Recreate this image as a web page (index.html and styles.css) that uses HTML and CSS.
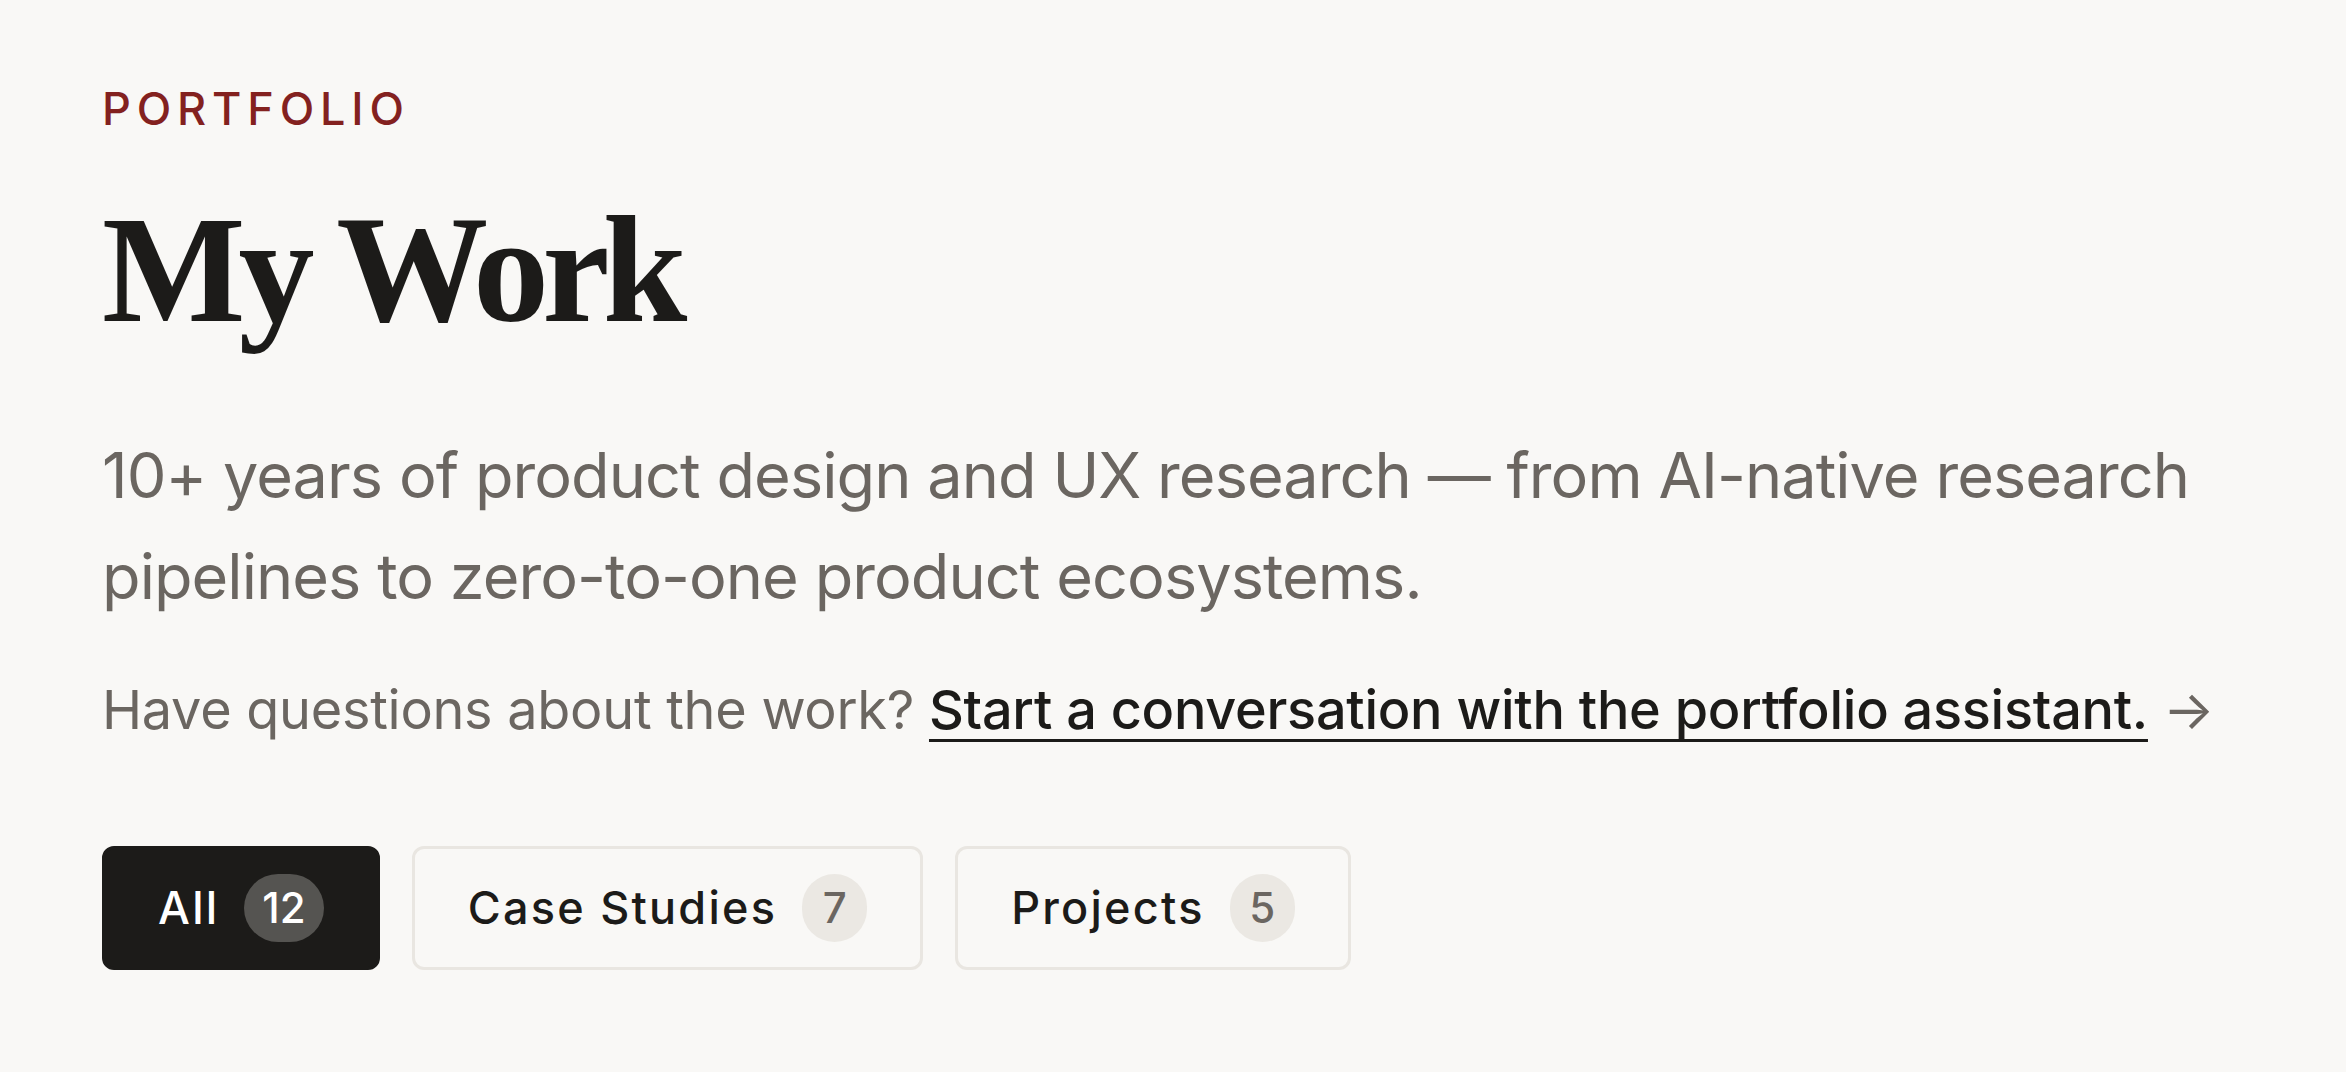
FILE: index.html
```html
<!DOCTYPE html>
<html lang="en">
<head>
<meta charset="utf-8">
<title>My Work</title>
<link rel="stylesheet" href="styles.css">
</head>
<body>
<main class="page">
  <header class="intro">
    <p class="eyebrow">Portfolio</p>
    <h1 class="title">My Work</h1>
    <p class="lede">10+ years of product design and UX research — from AI-native research pipelines to zero-to-one product ecosystems.</p>
    <p class="ask">Have questions about the work? <a class="ask-link" href="#">Start a conversation with the portfolio assistant.</a> <span class="arrow">→</span></p>
  </header>
  <nav class="filters">
    <button class="chip chip-active" type="button"><span class="chip-label">All</span><span class="count">12</span></button>
    <button class="chip" type="button"><span class="chip-label">Case Studies</span><span class="count">7</span></button>
    <button class="chip" type="button"><span class="chip-label">Projects</span><span class="count">5</span></button>
  </nav>
</main>
</body>
</html>
```

FILE: styles.css
```css
* {
  box-sizing: border-box;
}

html, body {
  margin: 0;
  padding: 0;
  background: #f9f8f6;
}

body {
  font-family: Inter, "Noto Sans", "Liberation Sans", sans-serif;
  color: #1c1b19;
}

.page {
  padding: 82px 102px 60px;
}

.intro {
  display: flex;
  flex-direction: column;
  align-items: flex-start;
}

.eyebrow {
  margin: 0;
  font-size: 45px;
  line-height: 54px;
  font-weight: 500;
  letter-spacing: 0.13em;
  text-transform: uppercase;
  color: #83211f;
}

.title {
  margin: 57px 0 0;
  font-family: "Liberation Serif", "Times New Roman", serif;
  font-weight: 700;
  font-size: 152px;
  line-height: 154px;
  letter-spacing: -0.045em;
  color: #1c1b19;
}

.lede {
  margin: 78px 0 0;
  max-width: 2160px;
  font-size: 63px;
  line-height: 100.8px;
  font-weight: 400;
  letter-spacing: -0.015em;
  color: #6b6661;
}

.ask {
  margin: 40px 0 0;
  font-size: 54px;
  line-height: 86.4px;
  letter-spacing: -0.005em;
  color: #6b6661;
}

.ask-link {
  color: #1c1b19;
  font-weight: 500;
  text-decoration: underline;
  text-decoration-thickness: 3px;
  text-underline-offset: 10px;
  text-decoration-skip-ink: none;
}

.arrow {
  color: #6b6661;
}

.filters {
  display: flex;
  gap: 32px;
  margin-top: 93px;
}

.chip {
  display: flex;
  align-items: center;
  gap: 25px;
  padding: 25px 53px;
  border: 3px solid #e9e6e1;
  border-radius: 12px;
  background: #f9f8f6;
  font-family: inherit;
  font-size: 45px;
  font-weight: 500;
  line-height: 68px;
  letter-spacing: 0.05em;
  color: #1c1b19;
  cursor: pointer;
}

.chip-active {
  background: #1c1b19;
  border-color: #1c1b19;
  color: #ffffff;
}

.count {
  display: inline-flex;
  align-items: center;
  justify-content: center;
  min-width: 65px;
  height: 68px;
  padding: 0 18px;
  border-radius: 34px;
  background: #ebe8e3;
  color: #6b6661;
  font-size: 42px;
  font-weight: 500;
  line-height: 68px;
  letter-spacing: 0;
}

.chip-active .count {
  background: #555451;
  color: #ffffff;
}
```
